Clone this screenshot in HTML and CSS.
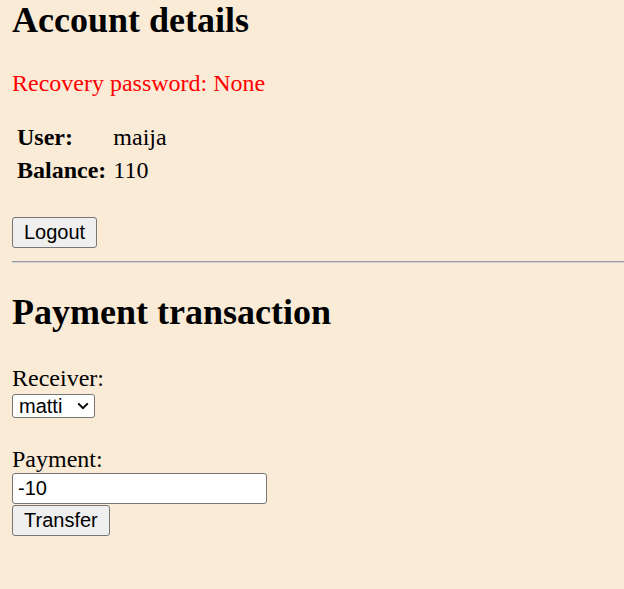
FILE: index.html
```html
<!DOCTYPE html>
<html lang="en">
<head>
<meta charset="utf-8">
<title>Bank</title>
<link rel="stylesheet" href="styles.css">
</head>
<body>
<section class="account">
  <h1 class="title">Account details</h1>
  <p class="warning">Recovery password: None</p>
  <table class="info">
    <tr><th>User:</th><td>maija</td></tr>
    <tr><th>Balance:</th><td>110</td></tr>
  </table>
  <form class="logout-form">
    <button type="button" class="btn">Logout</button>
  </form>
</section>
<hr class="divider">
<section class="payment">
  <h2 class="subtitle">Payment transaction</h2>
  <form class="pay-form">
    <label class="label" for="receiver">Receiver:</label>
    <span class="select-wrap">
      <select id="receiver" class="select">
        <option>matti</option>
      </select>
      <svg class="chevron" width="12" height="8" viewBox="0 0 12 8" aria-hidden="true"><path d="M1.2 1.4 L6 6.2 L10.8 1.4" fill="none" stroke="#000" stroke-width="2"/></svg>
    </span>
    <label class="label label-payment" for="amount">Payment:</label>
    <input id="amount" class="input" type="text" value="-10">
    <button type="button" class="btn btn-transfer">Transfer</button>
  </form>
</section>
</body>
</html>
```
FILE: styles.css
```css
html {
  background: #faebd7;
}
body {
  margin: 0;
  padding: 0 0 0 12px;
  font-family: "Liberation Serif", "Times New Roman", serif;
  font-size: 24px;
  line-height: 28px;
  color: #000;
}
.title,
.subtitle {
  font-size: 36px;
  line-height: 41px;
  font-weight: bold;
  margin: 0;
}
.title {
  margin-bottom: 28px;
}
.warning {
  color: #ff0000;
  margin: 0 0 22px;
}
.info {
  border-spacing: 3px;
}
.info th,
.info td {
  padding: 1px 2px;
  text-align: left;
  vertical-align: top;
}
.info th {
  font-weight: bold;
}
.logout-form {
  margin: 29px 0 0;
  display: flex;
}
.btn {
  font-family: "Liberation Sans", Arial, sans-serif;
  font-size: 20px;
  line-height: 23px;
  height: 31px;
  padding: 3px 11px;
  border: 1px solid #767676;
  border-radius: 3px;
  background: #efefef;
  color: #000;
  margin: 0;
}
.divider {
  margin: 13px 0 0;
  height: 0;
  border: 0;
  border-top: 1px solid #9a9a9a;
  border-bottom: 1px solid #cfd3d8;
}
.subtitle {
  margin-top: 29px;
}
.pay-form {
  display: flex;
  flex-direction: column;
  align-items: flex-start;
  margin: 31px 0 0;
}
.label {
  display: block;
}
.select-wrap {
  position: relative;
  display: inline-block;
  margin-top: 2px;
}
.select {
  appearance: none;
  -webkit-appearance: none;
  display: block;
  width: 83px;
  height: 24px;
  box-sizing: border-box;
  margin: 0;
  padding: 0 0 0 6px;
  font-family: "Liberation Sans", Arial, sans-serif;
  font-size: 20px;
  line-height: 22px;
  border: 1px solid #767676;
  border-radius: 3px;
  background: #fff;
  color: #000;
}
.chevron {
  position: absolute;
  right: 6px;
  top: 8px;
  pointer-events: none;
}
.label-payment {
  margin-top: 27px;
}
.input {
  box-sizing: border-box;
  width: 255px;
  height: 31px;
  margin: 0;
  padding: 0 5px;
  font-family: "Liberation Sans", Arial, sans-serif;
  font-size: 20px;
  border: 1px solid #767676;
  border-radius: 3px;
  background: #fff;
  color: #000;
}
.btn-transfer {
  margin-top: 1px;
}
```
